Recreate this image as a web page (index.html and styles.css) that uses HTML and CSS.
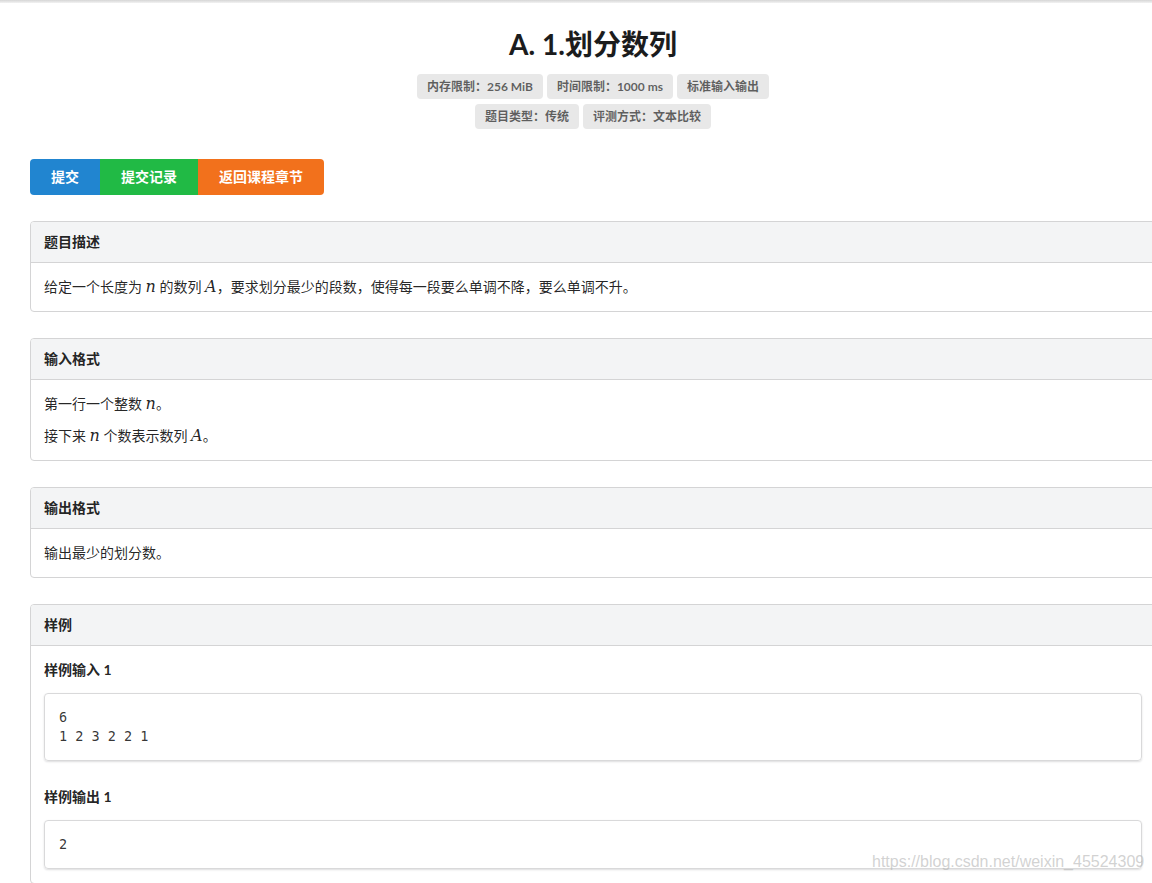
FILE: index.html
```html
<!DOCTYPE html>
<html lang="zh">
<head>
<meta charset="utf-8">
<title>A. 1.划分数列</title>
<link rel="stylesheet" href="styles.css">
</head>
<body>
<div class="topshade"></div>
<main class="page">
  <header class="problem-head">
    <h1 class="title">A. 1.划分数列</h1>
    <div class="labels">
      <span class="label">内存限制：256 MiB</span>
      <span class="label">时间限制：1000 ms</span>
      <span class="label">标准输入输出</span>
    </div>
    <div class="labels">
      <span class="label">题目类型：传统</span>
      <span class="label">评测方式：文本比较</span>
    </div>
  </header>

  <div class="buttons">
    <a class="btn blue">提交</a>
    <a class="btn green">提交记录</a>
    <a class="btn orange">返回课程章节</a>
  </div>

  <section class="segment">
    <h4 class="seg-head">题目描述</h4>
    <div class="seg-body">
      <p>给定一个长度为 <span class="math">n</span> 的数列 <span class="math">A</span>，要求划分最少的段数，使得每一段要么单调不降，要么单调不升。</p>
    </div>
  </section>

  <section class="segment">
    <h4 class="seg-head">输入格式</h4>
    <div class="seg-body">
      <p>第一行一个整数 <span class="math">n</span>。</p>
      <p>接下来 <span class="math">n</span> 个数表示数列 <span class="math">A</span>。</p>
    </div>
  </section>

  <section class="segment">
    <h4 class="seg-head">输出格式</h4>
    <div class="seg-body">
      <p>输出最少的划分数。</p>
    </div>
  </section>

  <section class="segment">
    <h4 class="seg-head">样例</h4>
    <div class="seg-body">
      <h5 class="sample-title">样例输入 1</h5>
      <pre class="code">6
1 2 3 2 2 1</pre>
      <h5 class="sample-title second">样例输出 1</h5>
      <pre class="code">2</pre>
    </div>
  </section>
</main>
<div class="watermark">https://blog.csdn.net/weixin_45524309</div>
</body>
</html>
```

FILE: styles.css
```css
html, body {
  margin: 0;
  padding: 0;
  overflow: hidden;
  background: #fff;
}
body {
  font-family: Lato, "Noto Sans CJK SC", "Noto Sans", sans-serif;
  font-size: 14px;
  line-height: 20px;
  color: rgba(0, 0, 0, 0.87);
  height: 883px;
  position: relative;
}
.topshade {
  position: absolute;
  left: 0;
  right: 0;
  top: 0;
  height: 3px;
  background: linear-gradient(#d6d6d6, #f2f2f2);
}
.page {
  width: 1126px;
  margin-left: 30px;
  padding-top: 26px;
}
.problem-head {
  display: flex;
  flex-direction: column;
  align-items: center;
}
.title {
  margin: 0;
  font-size: 28px;
  line-height: 36px;
  font-weight: 700;
  color: #1b1c1d;
}
.labels {
  display: flex;
  gap: 4px;
  justify-content: center;
}
.labels:first-of-type { margin-top: 12px; }
.labels + .labels { margin-top: 5px; }
.label {
  display: inline-block;
  background: #e8e8e8;
  color: rgba(0, 0, 0, 0.6);
  font-size: 12px;
  font-weight: 700;
  line-height: 12px;
  padding: 7px 10px 6px;
  border-radius: 4px;
}
.buttons {
  display: flex;
  margin-top: 30px;
}
.btn {
  display: inline-block;
  color: #fff;
  font-weight: 700;
  font-size: 14px;
  line-height: 14px;
  padding: 11px 21px;
}
.btn.blue { background: #2185d0; border-radius: 4px 0 0 4px; }
.btn.green { background: #21ba45; }
.btn.orange { background: #f2711c; border-radius: 0 4px 4px 0; }

.segment {
  margin-top: 26px;
  border: 1px solid #d4d4d5;
  border-radius: 4px;
  overflow: hidden;
}
.seg-head {
  margin: 0;
  background: #f3f4f5;
  border-bottom: 1px solid #d4d4d5;
  padding: 11px 13px 11px;
  font-size: 14px;
  line-height: 18px;
  font-weight: 700;
  color: rgba(0, 0, 0, 0.87);
}
.seg-body {
  padding: 14px 13px;
}
.seg-body p {
  margin: 0 0 12px;
  line-height: 20px;
}
.seg-body p:last-child { margin-bottom: 0; }
.math {
  font-family: "DejaVu Serif", "Liberation Serif", serif;
  font-style: italic;
  font-size: 16px;
}
.sample-title {
  margin: 0 0 13px;
  font-size: 14px;
  line-height: 20px;
  font-weight: 700;
}
.sample-title.second { margin-top: 26px; }
.code {
  margin: 0;
  border: 1px solid #d9d9da;
  border-radius: 4px;
  box-shadow: 0 1px 2px 0 rgba(34, 36, 38, 0.15);
  padding: 14px 14px;
  font-family: "DejaVu Sans Mono", "Liberation Mono", monospace;
  font-size: 13.5px;
  line-height: 19px;
  color: rgba(0, 0, 0, 0.8);
}
.watermark {
  position: absolute;
  left: 872px;
  top: 852px;
  font-family: "Liberation Sans", Arial, sans-serif;
  font-size: 16px;
  line-height: 20px;
  color: rgba(180, 180, 180, 0.6);
  white-space: nowrap;
}
```
